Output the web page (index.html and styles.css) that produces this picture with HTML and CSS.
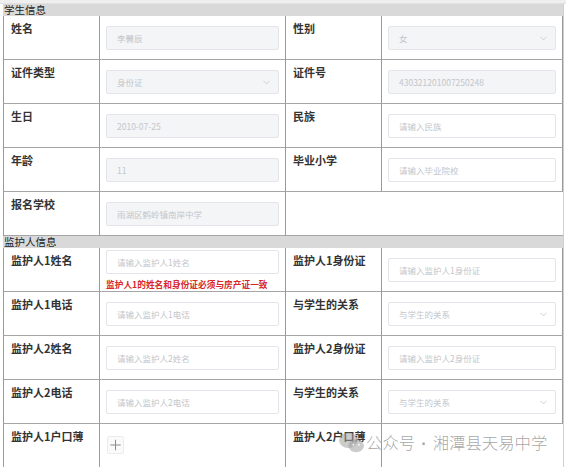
FILE: index.html
```html
<!DOCTYPE html>
<html lang="zh-CN">
<head>
<meta charset="utf-8">
<title>学生信息</title>
<link rel="stylesheet" href="styles.css">
</head>
<body>
<div class="page">
  <div class="topstrip"></div>
  <div class="form">
    <div class="section">学生信息</div>

    <div class="label">姓名</div>
    <div class="field"><div class="input disabled">李馨辰</div></div>
    <div class="label">性别</div>
    <div class="field"><div class="input disabled select">女<svg class="chev" viewBox="0 0 8 5"><polyline points="0.5,0.5 4,4 7.5,0.5"/></svg></div></div>

    <div class="label">证件类型</div>
    <div class="field"><div class="input disabled select">身份证<svg class="chev" viewBox="0 0 8 5"><polyline points="0.5,0.5 4,4 7.5,0.5"/></svg></div></div>
    <div class="label">证件号</div>
    <div class="field"><div class="input disabled">430321201007250248</div></div>

    <div class="label">生日</div>
    <div class="field"><div class="input disabled">2010-07-25</div></div>
    <div class="label">民族</div>
    <div class="field"><div class="input">请输入民族</div></div>

    <div class="label">年龄</div>
    <div class="field"><div class="input disabled">11</div></div>
    <div class="label">毕业小学</div>
    <div class="field"><div class="input">请输入毕业院校</div></div>

    <div class="label">报名学校</div>
    <div class="field"><div class="input disabled">雨湖区鹤岭镇南岸中学</div></div>
    <div class="blank"></div>

    <div class="section">监护人信息</div>

    <div class="label">监护人1姓名</div>
    <div class="field top"><div class="input">请输入监护人1姓名</div><div class="hint">监护人1的姓名和身份证必须与房产证一致</div></div>
    <div class="label">监护人1身份证</div>
    <div class="field"><div class="input">请输入监护人1身份证</div></div>

    <div class="label">监护人1电话</div>
    <div class="field"><div class="input">请输入监护人1电话</div></div>
    <div class="label">与学生的关系</div>
    <div class="field"><div class="input select">与学生的关系<svg class="chev" viewBox="0 0 8 5"><polyline points="0.5,0.5 4,4 7.5,0.5"/></svg></div></div>

    <div class="label">监护人2姓名</div>
    <div class="field"><div class="input">请输入监护人2姓名</div></div>
    <div class="label">监护人2身份证</div>
    <div class="field"><div class="input">请输入监护人2身份证</div></div>

    <div class="label">监护人2电话</div>
    <div class="field"><div class="input">请输入监护人2电话</div></div>
    <div class="label">与学生的关系</div>
    <div class="field"><div class="input select">与学生的关系<svg class="chev" viewBox="0 0 8 5"><polyline points="0.5,0.5 4,4 7.5,0.5"/></svg></div></div>

    <div class="label tall">监护人1户口薄</div>
    <div class="field tall"><div class="upload"><svg viewBox="0 0 16 16"><path d="M8 2.5V13.5M2.5 8H13.5"/></svg></div></div>
    <div class="label tall">监护人2户口薄</div>
    <div class="field tall"></div>
  </div>

  <div class="watermark">
    <svg class="wx" viewBox="0 0 30 26">
      <ellipse cx="11" cy="10" rx="10" ry="8.5"/>
      <ellipse cx="19.5" cy="16" rx="8.5" ry="7"/>
      <circle cx="16.5" cy="15" r="1.1" class="eye"/>
      <circle cx="22.5" cy="15" r="1.1" class="eye"/>
    </svg>
    <span class="wm-text">公众号<span class="dot">·</span>湘潭县天易中学</span>
  </div>
</div>
</body>
</html>
```

FILE: styles.css
```css
* { box-sizing: border-box; }
html, body { margin: 0; padding: 0; background: #fff; }
body {
  font-family: "Noto Sans CJK SC", "Noto Sans", sans-serif;
  color: #333;
  overflow: hidden;
}
.page {
  position: relative;
  width: 566px;
  height: 467px;
  overflow: hidden;
}
.topstrip {
  height: 4px;
  background: #efefef;
  border-bottom: 1px solid #e2e2e2;
}
.form {
  margin-left: 3px;
  width: 561px;
  border-left: 1px solid #9a9a9a;
  border-right: 1px solid #d0d0d0;
  display: grid;
  grid-template-columns: 96px 186px 96px 1fr;
}
.section {
  grid-column: 1 / -1;
  height: 12px;
  background: #d9d9d9;
  font-size: 10.5px;
  line-height: 12px;
  padding-left: 1px;
  color: #222;
  margin-left: -1px;
}
.label, .field, .blank {
  height: 44px;
  border-bottom: 1px solid #a6a6a6;
  border-right: 1px solid #9a9a9a;
}
.label {
  font-size: 11px;
  font-weight: bold;
  line-height: 14px;
  padding: 5px 0 0 7px;
  color: #333;
}
.field {
  padding: 10px 6px 0 6px;
}
.blank {
  grid-column: span 2;
  border-right: none;
}
.input {
  height: 24px;
  border: 1px solid #e3e5ea;
  border-radius: 2px;
  background: #fff;
  font-size: 8.5px;
  line-height: 22px;
  padding-left: 10px;
  color: #c3c6cc;
  position: relative;
  white-space: nowrap;
}
.input.disabled { background: #f4f5f7; }
.chev {
  position: absolute;
  right: 8px;
  top: 9px;
  width: 7px;
  height: 5px;
  fill: none;
  stroke: #c7cad0;
  stroke-width: 1;
}
.field.top { padding-top: 2px; }
.hint {
  font-size: 8.7px;
  line-height: 12px;
  margin-top: 5px;
  color: #d8262a;
  white-space: nowrap;
  font-weight: bold;
}
.label.tall, .field.tall { height: 60px; border-bottom: none; }
.field:last-child { border-right: none; }
.upload {
  width: 17px;
  height: 18px;
  border: 1px solid #ececec;
  border-radius: 2px;
  margin: 2px 0 0 1px;
  background: #fafafa;
}
.upload svg {
  display: block;
  width: 15px;
  height: 16px;
  fill: none;
  stroke: #8c8c8c;
  stroke-width: 1.1;
}
.watermark {
  position: absolute;
  left: 338px;
  top: 429px;
  display: flex;
  align-items: center;
  color: rgba(150, 150, 150, 0.85);
  white-space: nowrap;
}
.wm-text {
  font-size: 16.4px;
  line-height: 26px;
  font-weight: 300;
}
.dot {
  font-family: "Liberation Sans", sans-serif;
  font-weight: bold;
  margin: 0 6px;
}
.wx {
  width: 28px;
  height: 24px;
  fill: rgba(160, 160, 160, 0.55);
}
.wx .eye { fill: rgba(255, 255, 255, 0.8); }
```
